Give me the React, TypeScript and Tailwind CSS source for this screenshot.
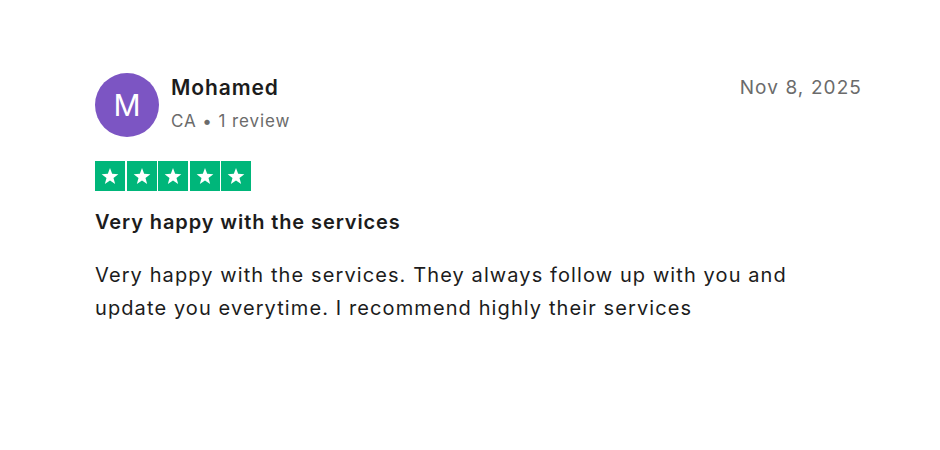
const Star = () => (
  <svg viewBox="0 0 24 24" className="h-[20px] w-[20px]" fill="white">
    <path d="M12 2.5l2.6 6.9 7.4.4-5.8 4.6 2 7.1L12 17.4l-6.2 4.1 2-7.1L2 9.8l7.4-.4z" />
  </svg>
);

export default function App() {
  return (
    <div className="min-h-[450px] w-[940px] bg-white font-['Inter',sans-serif] text-[#1c1c1c]">
      <article className="pl-[95px] pr-[78px] pt-[73px]">
        <div className="flex items-start justify-between">
          <div className="flex items-center gap-[12px]">
            <div className="flex h-[64px] w-[64px] items-center justify-center rounded-full bg-[#7c55c3] text-[30px] text-white">
              M
            </div>
            <div className="flex flex-col">
              <span className="mt-[-3px] text-[21px] font-semibold leading-[28px] tracking-[0.9px]">Mohamed</span>
              <span className="mt-[7px] text-[17px] leading-[24px] tracking-[0.9px] text-[#6b6b6b]">CA • 1 review</span>
            </div>
          </div>
          <span className="mt-[2px] text-[19px] leading-[26px] tracking-[1.1px] text-[#6b6b6b]">Nov 8, 2025</span>
        </div>
        <div className="mt-[24px] flex gap-[1.5px]">
          {[0, 1, 2, 3, 4].map((i) => (
            <div key={i} className="flex h-[30px] w-[30px] items-center justify-center bg-[#00b67a]">
              <Star />
            </div>
          ))}
        </div>
        <h2 className="mt-[16px] text-[20px] font-semibold leading-[30px] tracking-[0.9px]">
          Very happy with the services
        </h2>
        <p className="mt-[22px] max-w-[740px] text-[20px] leading-[33px] tracking-[1.1px]">
          Very happy with the services. They always follow up with you and update you everytime. I recommend highly
          their services
        </p>
      </article>
    </div>
  );
}
